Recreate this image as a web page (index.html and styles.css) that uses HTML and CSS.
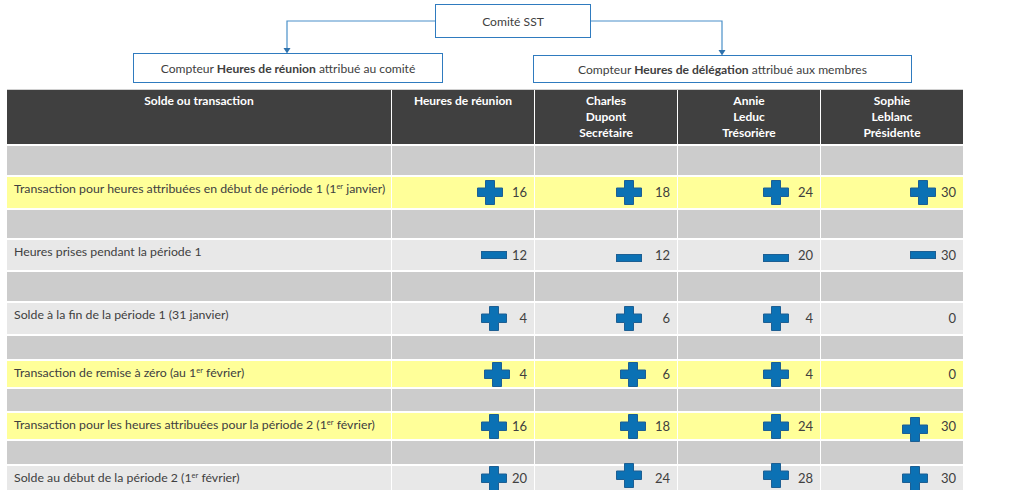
FILE: index.html
```html
<!DOCTYPE html>
<html lang="fr">
<head>
<meta charset="utf-8">
<title>Compteurs</title>
<link rel="stylesheet" href="styles.css">
</head>
<body>
<div class="diagram">
  <svg class="links" width="1011" height="89" viewBox="0 0 1011 89">
    <polyline points="435,21 287,21 287,49" fill="none" stroke="#4a90c9" stroke-width="1.2"/>
    <polygon points="283.5,48 290.5,48 287,53.5" fill="#2f72ad"/>
    <polyline points="590,21 722,21 722,51" fill="none" stroke="#4a90c9" stroke-width="1.2"/>
    <polygon points="718.5,50 725.5,50 722,55.5" fill="#2f72ad"/>
  </svg>
  <div class="box box-top">Comité SST</div>
  <div class="box box-left">Compteur&nbsp;<b>Heures de réunion</b>&nbsp;attribué au comité</div>
  <div class="box box-right">Compteur&nbsp;<b>Heures de délégation</b>&nbsp;attribué aux membres</div>
</div>

<div class="table">
  <div class="th">Solde ou transaction</div>
  <div class="th">Heures de réunion</div>
  <div class="th">Charles<br>Dupont<br>Secrétaire</div>
  <div class="th">Annie<br>Leduc<br>Trésorière</div>
  <div class="th">Sophie<br>Leblanc<br>Présidente</div>

  <div class="sp"></div><div class="sp"></div><div class="sp"></div><div class="sp"></div><div class="sp"></div>

  <div class="lbl yel"><span>Transaction pour heures attribuées en début de période 1 (1<sup>er</sup>&nbsp;janvier)</span></div>
  <div class="val yel"><svg class="plus mid" viewBox="0 0 26 25"><path d="M8.5 .5h9v7.5h8v8.5h-8v8h-9v-8h-8v-8.5h8z"/></svg><span class="n">16</span></div>
  <div class="val yel"><svg class="plus far" viewBox="0 0 26 25"><path d="M8.5 .5h9v7.5h8v8.5h-8v8h-9v-8h-8v-8.5h8z"/></svg><span class="n">18</span></div>
  <div class="val yel"><svg class="plus mid" viewBox="0 0 26 25"><path d="M8.5 .5h9v7.5h8v8.5h-8v8h-9v-8h-8v-8.5h8z"/></svg><span class="n">24</span></div>
  <div class="val yel"><svg class="plus near" viewBox="0 0 26 25"><path d="M8.5 .5h9v7.5h8v8.5h-8v8h-9v-8h-8v-8.5h8z"/></svg><span class="n">30</span></div>

  <div class="sp"></div><div class="sp"></div><div class="sp"></div><div class="sp"></div><div class="sp"></div>

  <div class="lbl lt"><span>Heures prises pendant la période 1</span></div>
  <div class="val lt"><svg class="minus near" viewBox="0 0 26 8"><rect x=".5" y=".5" width="25" height="7"/></svg><span class="n">12</span></div>
  <div class="val lt"><svg class="minus far low" viewBox="0 0 26 8"><rect x=".5" y=".5" width="25" height="7"/></svg><span class="n">12</span></div>
  <div class="val lt"><svg class="minus mid low" viewBox="0 0 26 8"><rect x=".5" y=".5" width="25" height="7"/></svg><span class="n">20</span></div>
  <div class="val lt"><svg class="minus near" viewBox="0 0 26 8"><rect x=".5" y=".5" width="25" height="7"/></svg><span class="n">30</span></div>

  <div class="sp"></div><div class="sp"></div><div class="sp"></div><div class="sp"></div><div class="sp"></div>

  <div class="lbl lt"><span>Solde à la fin de la période 1 (31 janvier)</span></div>
  <div class="val lt"><svg class="plus near" viewBox="0 0 26 25"><path d="M8.5 .5h9v7.5h8v8.5h-8v8h-9v-8h-8v-8.5h8z"/></svg><span class="n">4</span></div>
  <div class="val lt"><svg class="plus far" viewBox="0 0 26 25"><path d="M8.5 .5h9v7.5h8v8.5h-8v8h-9v-8h-8v-8.5h8z"/></svg><span class="n">6</span></div>
  <div class="val lt"><svg class="plus mid" viewBox="0 0 26 25"><path d="M8.5 .5h9v7.5h8v8.5h-8v8h-9v-8h-8v-8.5h8z"/></svg><span class="n">4</span></div>
  <div class="val lt"><span class="n">0</span></div>

  <div class="sp"></div><div class="sp"></div><div class="sp"></div><div class="sp"></div><div class="sp"></div>

  <div class="lbl yel"><span>Transaction de remise à zéro (au 1<sup>er</sup>&nbsp;février)</span></div>
  <div class="val yel"><svg class="plus nearer" viewBox="0 0 26 25"><path d="M8.5 .5h9v7.5h8v8.5h-8v8h-9v-8h-8v-8.5h8z"/></svg><span class="n">4</span></div>
  <div class="val yel"><svg class="plus mid" viewBox="0 0 26 25"><path d="M8.5 .5h9v7.5h8v8.5h-8v8h-9v-8h-8v-8.5h8z"/></svg><span class="n">6</span></div>
  <div class="val yel"><svg class="plus mid" viewBox="0 0 26 25"><path d="M8.5 .5h9v7.5h8v8.5h-8v8h-9v-8h-8v-8.5h8z"/></svg><span class="n">4</span></div>
  <div class="val yel"><span class="n">0</span></div>

  <div class="sp"></div><div class="sp"></div><div class="sp"></div><div class="sp"></div><div class="sp"></div>

  <div class="lbl yel"><span>Transaction pour les heures attribuées pour la période 2 (1<sup>er</sup>&nbsp;février)</span></div>
  <div class="val yel"><svg class="plus near" viewBox="0 0 26 25"><path d="M8.5 .5h9v7.5h8v8.5h-8v8h-9v-8h-8v-8.5h8z"/></svg><span class="n">16</span></div>
  <div class="val yel"><svg class="plus mid" viewBox="0 0 26 25"><path d="M8.5 .5h9v7.5h8v8.5h-8v8h-9v-8h-8v-8.5h8z"/></svg><span class="n">18</span></div>
  <div class="val yel"><svg class="plus mid" viewBox="0 0 26 25"><path d="M8.5 .5h9v7.5h8v8.5h-8v8h-9v-8h-8v-8.5h8z"/></svg><span class="n">24</span></div>
  <div class="val yel"><svg class="plus far low" viewBox="0 0 26 25"><path d="M8.5 .5h9v7.5h8v8.5h-8v8h-9v-8h-8v-8.5h8z"/></svg><span class="n">30</span></div>

  <div class="sp"></div><div class="sp"></div><div class="sp"></div><div class="sp"></div><div class="sp"></div>

  <div class="lbl lt"><span>Solde au début de la période 2 (1<sup>er</sup>&nbsp;février)</span></div>
  <div class="val lt"><svg class="plus near" viewBox="0 0 26 25"><path d="M8.5 .5h9v7.5h8v8.5h-8v8h-9v-8h-8v-8.5h8z"/></svg><span class="n">20</span></div>
  <div class="val lt"><svg class="plus far high" viewBox="0 0 26 25"><path d="M8.5 .5h9v7.5h8v8.5h-8v8h-9v-8h-8v-8.5h8z"/></svg><span class="n">24</span></div>
  <div class="val lt"><svg class="plus mid high" viewBox="0 0 26 25"><path d="M8.5 .5h9v7.5h8v8.5h-8v8h-9v-8h-8v-8.5h8z"/></svg><span class="n">28</span></div>
  <div class="val lt"><svg class="plus far" viewBox="0 0 26 25"><path d="M8.5 .5h9v7.5h8v8.5h-8v8h-9v-8h-8v-8.5h8z"/></svg><span class="n">30</span></div>
</div>
</body>
</html>
```

FILE: styles.css
```css
* { box-sizing: border-box; }
html, body { margin: 0; padding: 0; background: #ffffff; }
body {
  font-family: Lato, "Liberation Sans", sans-serif;
  font-size: 12.3px;
  color: #404040;
  width: 1011px;
}

.diagram {
  position: relative;
  height: 89px;
}
.links { position: absolute; left: 0; top: 0; }
.box {
  position: absolute;
  display: flex;
  align-items: center;
  justify-content: center;
  border: 1.5px solid #2f7bbf;
  background: #ffffff;
  font-size: 12.1px;
  color: #404040;
  white-space: nowrap;
}
.box b { font-weight: 700; }
.box-top { left: 435px; top: 4px; width: 156px; height: 34px; }
.box-left { left: 133px; top: 53px; width: 310px; height: 30px; }
.box-right { left: 533px; top: 55px; width: 379px; height: 28px; }

.table {
  margin-left: 7px;
  width: 956px;
  display: grid;
  grid-template-columns: 384px 142px 142px 142px 142px;
  grid-template-rows: 54px 29px 31px 28px 30px 29px 31px 23px 26px 22px 26px 23px 24px;
  column-gap: 1px;
  row-gap: 2px;
  background: #ffffff;
  border-top: 1px solid #d0d0d0;
}

.th {
  background: #404040;
  color: #ffffff;
  font-weight: 700;
  text-align: center;
  line-height: 16px;
  padding-top: 3px;
  font-size: 12px;
}
.sp { background: #cccccc; }
.yel { background: #ffff99; }
.lt { background: #e8e8e8; }

.lbl {
  padding: 4px 0 0 7px;
  line-height: 15px;
  white-space: nowrap;
}
sup {
  font-size: 7.5px;
  line-height: 0;
  vertical-align: 4px;
}

.val {
  display: flex;
  align-items: center;
  justify-content: flex-end;
  padding-right: 7px;
}
.n {
  width: 16px;
  text-align: right;
  font-size: 13px;
  line-height: 1;
}

.plus, .minus {
  fill: #0b71b4;
  stroke: #1d5f93;
  stroke-width: 1;
  flex: none;
}
.plus { width: 26px; height: 25px; }
.minus { width: 26px; height: 8px; }

.nearer { margin-right: 1px; }
.near { margin-right: 4px; }
.mid { margin-right: 8px; }
.far { margin-right: 12px; }
.low { position: relative; top: 3px; }
.high { position: relative; top: -3px; }
```
